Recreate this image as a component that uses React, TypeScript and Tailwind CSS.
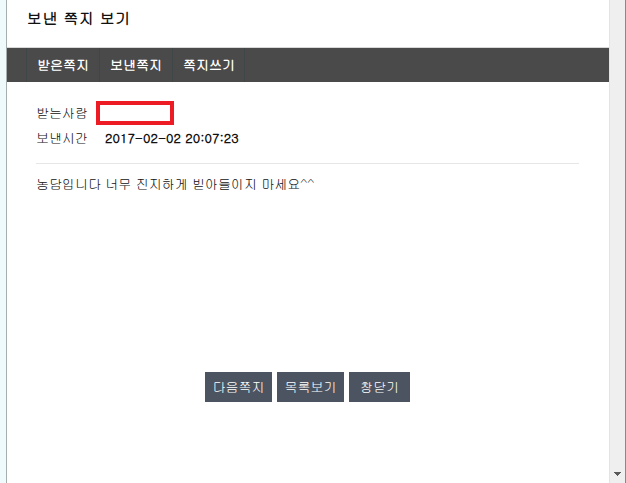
import React from 'react';

const KR = "font-['Gulim','Dotum','Noto_Sans_CJK_KR',sans-serif]";

const tabs = ['받은쪽지', '보낸쪽지', '쪽지쓰기'];
const buttons = [
  { label: '다음쪽지', w: 'w-[67px]' },
  { label: '목록보기', w: 'w-[67px]' },
  { label: '창닫기', w: 'w-[61px]' },
];

export default function App() {
  return (
    <div className={`flex h-[483px] w-[626px] overflow-hidden bg-white text-[13px] text-[#111] ${KR}`}>
      {/* left frame edge */}
      <div className="w-[6px] shrink-0 bg-[#eefafc]" />
      <div className="w-[1px] shrink-0 bg-[#a6aeae]" />

      {/* page */}
      <div className="flex min-w-0 flex-1 flex-col">
        <div className="h-[48px] shrink-0 border-b border-[#d8d8d8] pl-[20px] pt-[7px]">
          <h1 className="text-[15px] font-bold tracking-[0.5px] text-[#111]">보낸 쪽지 보기</h1>
        </div>

        {/* tabs */}
        <div className="flex h-[34px] shrink-0 bg-[#4a4a4a] pl-[19px]">
          {tabs.map((t, i) => (
            <div
              key={t}
              className={`flex w-[73px] items-center border-l border-[#3f4648] pl-[10px] text-[13px] font-bold text-white ${
                i === tabs.length - 1 ? 'border-r' : ''
              }`}
            >
              {t}
            </div>
          ))}
        </div>

        {/* body */}
        <div className="flex flex-1 flex-col px-[29px] pt-[19px]">
          <div className="flex items-center">
            <span className="w-[60px]">받는사람</span>
            <div className="h-[24px] w-[78px] border-[4px] border-[#ed1c24]" />
          </div>
          <div className="mt-[3px] flex items-center">
            <span className="w-[69px]">보낸시간</span>
            <span className="font-bold">2017-02-02 20:07:23</span>
          </div>
          <div className="mt-[15px] mr-[1px] h-[1px] bg-[#e6e6e6]" />
          <p className="mt-[10px]">농담입니다 너무 진지하게 빋아들이지 마세요^^</p>

          <div className="mt-[179px] flex justify-center gap-[5px] pr-[1px]">
            {buttons.map((b) => (
              <button
                key={b.label}
                className={`flex h-[30px] items-center justify-center bg-[#4b5460] text-[13px] text-white ${b.w} ${KR}`}
              >
                {b.label}
              </button>
            ))}
          </div>
        </div>
      </div>

      {/* scrollbar */}
      <div className="flex w-[16px] shrink-0 flex-col justify-end border-l border-[#e3e3e3] bg-[#efefef] pb-[6px]">
        <svg width="15" height="6" viewBox="0 0 15 6" className="mx-auto">
          <path d="M4 1h7v1H4zM5 2h5v1H5zM6 3h3v1H6zM7 4h1v1H7z" fill="#5a5a5a" />
        </svg>
      </div>
      <div className="w-[1px] shrink-0 bg-[#7f8c96]" />
    </div>
  );
}
